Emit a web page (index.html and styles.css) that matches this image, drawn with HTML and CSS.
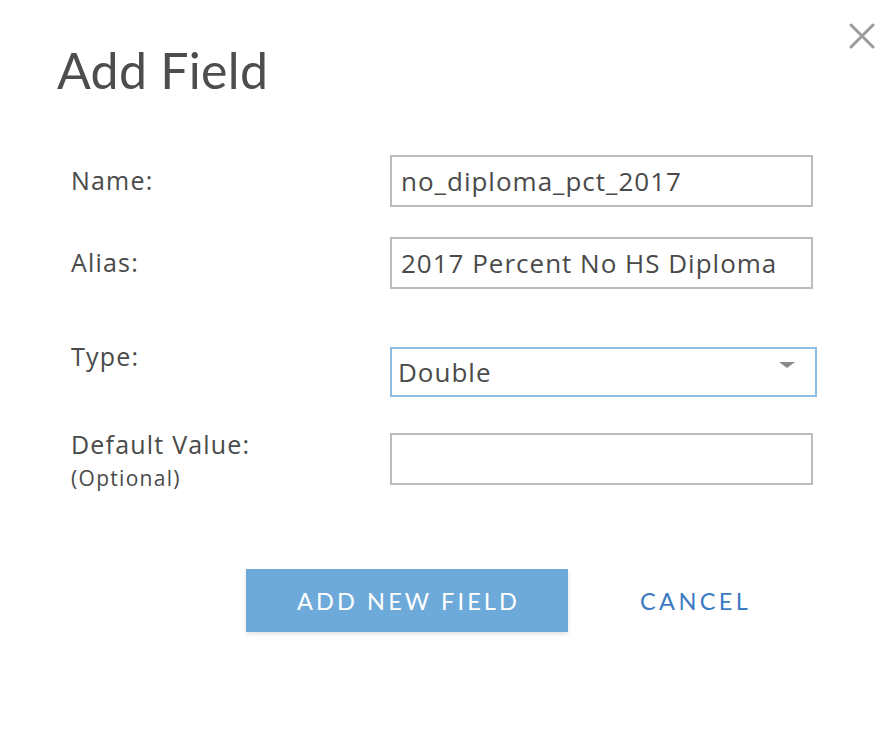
FILE: index.html
```html
<!DOCTYPE html>
<html lang="en">
<head>
<meta charset="utf-8">
<title>Add Field</title>
<link rel="stylesheet" href="styles.css">
</head>
<body>
<div class="dialog">
  <button class="close" aria-label="Close">
    <svg width="26" height="26" viewBox="0 0 26 26"><path d="M2 2 L24 24 M24 2 L2 24" stroke="#9b9b9b" stroke-width="3" stroke-linecap="round" fill="none"/></svg>
  </button>
  <h1 class="title">Add Field</h1>
  <div class="form">
    <div class="row row-name">
      <label class="label">Name:</label>
      <div class="field">no_diploma_pct_2017</div>
    </div>
    <div class="row row-alias">
      <label class="label">Alias:</label>
      <div class="field">2017 Percent No HS Diploma</div>
    </div>
    <div class="row row-type">
      <label class="label label-type">Type:</label>
      <div class="field select">Double<span class="caret"></span></div>
    </div>
    <div class="row row-default">
      <label class="label label-default">Default Value:<span class="optional">(Optional)</span></label>
      <div class="field"></div>
    </div>
  </div>
  <div class="actions">
    <button class="btn-primary">ADD NEW FIELD</button>
    <button class="btn-link">CANCEL</button>
  </div>
</div>
</body>
</html>
```
FILE: styles.css
```css
html, body {
  margin: 0;
  padding: 0;
  background: #fff;
}
body {
  font-family: "Open Sans", "Lato", sans-serif;
  color: #4a4a4a;
}
.dialog {
  position: relative;
  width: 896px;
  height: 749px;
  box-sizing: border-box;
  padding: 38px 0 0 57px;
}
.close {
  position: absolute;
  top: 23px;
  right: 21px;
  width: 26px;
  height: 26px;
  padding: 0;
  border: 0;
  background: none;
  display: flex;
}
.title {
  margin: 0;
  font-family: "Lato", sans-serif;
  font-weight: 400;
  font-size: 50px;
  line-height: 64px;
  color: #4d4d4d;
  letter-spacing: 0.3px;
}
.form {
  display: flex;
  flex-direction: column;
  padding-left: 14px;
  margin-top: 53px;
}
.row {
  display: flex;
  align-items: flex-start;
}
.row-alias { margin-top: 30px; }
.row-type { margin-top: 58px; }
.row-default { margin-top: 36px; }
.label {
  width: 319px;
  font-size: 25px;
  line-height: 30px;
  letter-spacing: 1.2px;
  padding-top: 10px;
  color: #4a4a4a;
}
.label-type { padding-top: 0; margin-top: -6px; }
.label-default {
  display: flex;
  flex-direction: column;
  padding-top: 0;
  margin-top: -4px;
}
.optional {
  font-size: 21px;
  line-height: 26px;
  letter-spacing: 1.3px;
  margin-top: 6px;
}
.field {
  box-sizing: border-box;
  width: 423px;
  height: 52px;
  border: 2px solid #bcbcbc;
  padding: 0 9px;
  font-size: 26px;
  line-height: 48px;
  letter-spacing: 1px;
  color: #4a4a4a;
  white-space: nowrap;
}
.select {
  position: relative;
  width: 427px;
  height: 50px;
  border-color: #8dbde2;
  padding-left: 6px;
  line-height: 46px;
  display: flex;
  align-items: center;
  justify-content: space-between;
  padding-right: 20px;
}
.caret {
  width: 0;
  height: 0;
  border-left: 8px solid transparent;
  border-right: 8px solid transparent;
  border-top: 6px solid #8a8a8a;
  margin-bottom: 14px;
}
.actions {
  display: flex;
  align-items: center;
  margin-top: 78px;
  padding-left: 189px;
}
.btn-primary {
  width: 322px;
  height: 63px;
  border: 0;
  background: #6eaad9;
  color: #fff;
  font-family: "Lato", sans-serif;
  font-size: 23.5px;
  letter-spacing: 3.1px;
  box-shadow: 0 2px 4px rgba(0,0,0,0.12);
  padding: 0 0 0 3px;
}
.btn-link {
  margin-left: 72px;
  border: 0;
  background: none;
  padding: 0;
  color: #3b7bc2;
  font-family: "Lato", sans-serif;
  font-size: 23.5px;
  letter-spacing: 3.4px;
}
```
